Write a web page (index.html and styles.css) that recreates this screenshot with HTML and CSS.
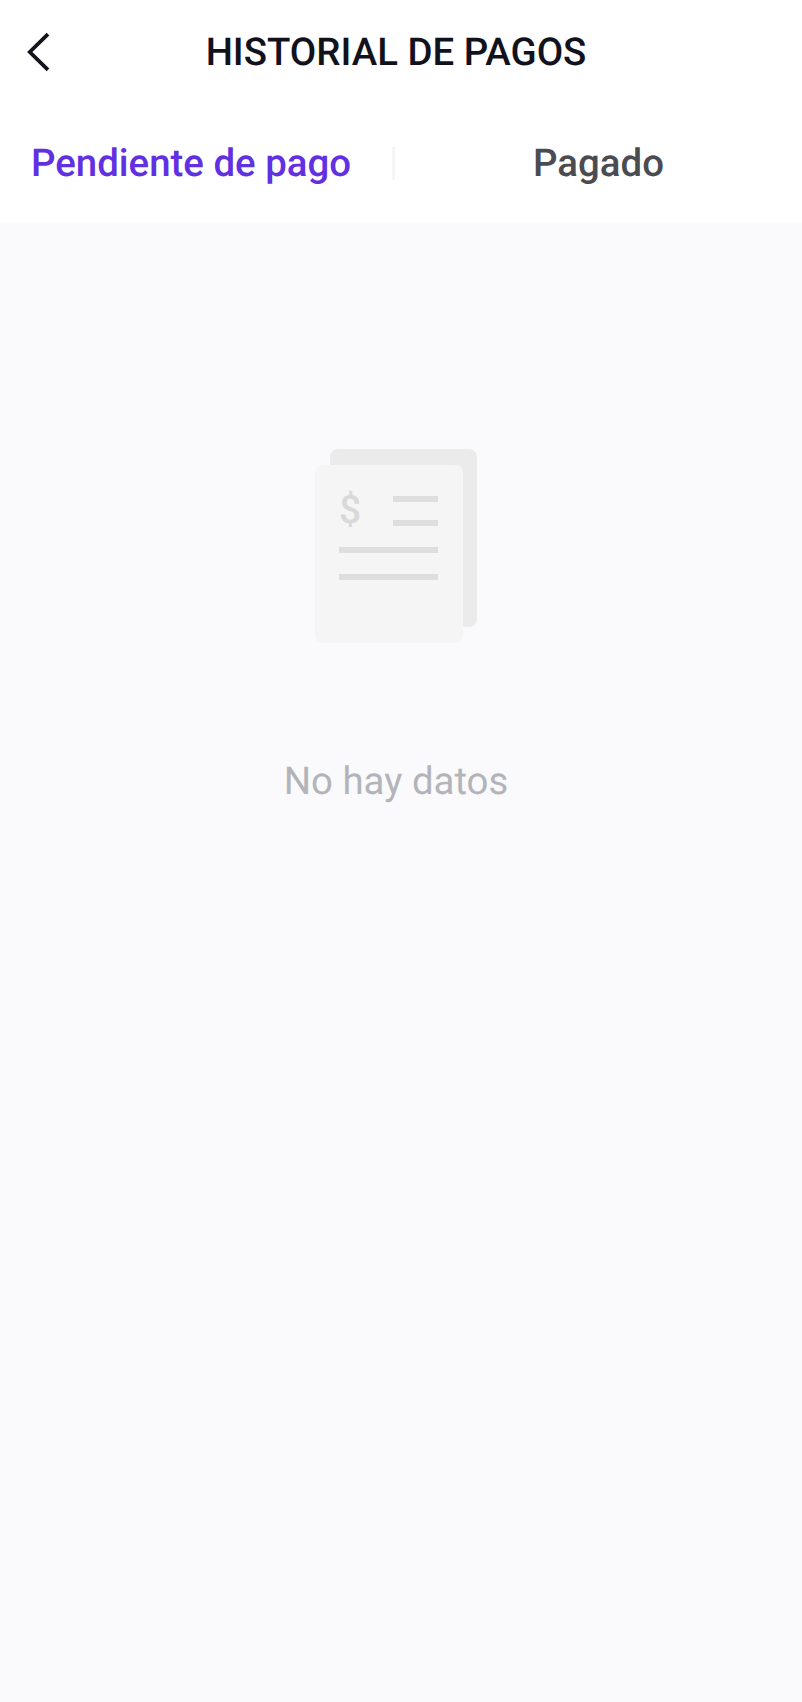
FILE: index.html
```html
<!DOCTYPE html>
<html lang="es">
<head>
<meta charset="utf-8">
<title>Historial de pagos</title>
<link rel="stylesheet" href="styles.css">
</head>
<body>
<div class="page">
  <header class="topbar">
    <svg class="back" width="26" height="40" viewBox="0 0 26 40" aria-hidden="true"><path d="M22 2.2 L3.8 20 L22 37.8" fill="none" stroke="#14141c" stroke-width="3.8"/></svg>
    <h1 class="title">HISTORIAL DE PAGOS</h1>
  </header>
  <nav class="tabs">
    <div class="tab tab-active">Pendiente de pago</div>
    <div class="divider"></div>
    <div class="tab">Pagado</div>
  </nav>
  <main class="empty">
    <svg class="empty-icon" width="162" height="194" viewBox="0 0 162 194" aria-hidden="true">
      <rect x="15" y="0" width="147" height="178" rx="8" fill="#ebebec"/>
      <rect x="0" y="16" width="148" height="178" rx="8" fill="#f6f5f6"/>
      <text class="dollar" x="24" y="74">$</text>
      <rect x="78" y="47" width="45" height="6" fill="#dedede"/>
      <rect x="78" y="71" width="45" height="6" fill="#dedede"/>
      <rect x="24" y="98" width="99" height="6" fill="#dedede"/>
      <rect x="24" y="125" width="99" height="6" fill="#dedede"/>
    </svg>
    <p class="empty-text">No hay datos</p>
  </main>
</div>
</body>
</html>
```
FILE: styles.css
```css
* { box-sizing: border-box; margin: 0; padding: 0; }
html, body { height: 100%; }
body { font-family: Roboto, "Liberation Sans", sans-serif; background: #fafafc; text-rendering: geometricPrecision; }
.page { display: flex; flex-direction: column; height: 1702px; }
.topbar { position: relative; height: 104px; padding: 1px 10px 0 0; background: #fff; display: flex; align-items: center; justify-content: center; }
.back { position: absolute; left: 26px; top: 32px; }
.title { font-size: 38.4px; font-weight: 500; line-height: 103px; color: #12121c; }
.tabs { height: 119px; background: #fff; display: flex; align-items: center; }
.tab { font-size: 38.4px; font-weight: 500; color: #4b4b52; flex: 1; text-align: center; }
.tab-active { flex: 0 0 392px; color: #6130e3; text-align: left; padding-left: 31px; white-space: nowrap; }
.divider { width: 3px; height: 33px; background: #f5f5f6; }
.empty { flex: 1; display: flex; flex-direction: column; align-items: center; padding: 226px 10px 0 0; }
.empty-icon { display: block; }
.dollar { font-family: Roboto, sans-serif; font-size: 39px; font-weight: 500; fill: #d9d9da; }
.empty-text { margin-top: 115px; font-size: 38.4px; line-height: 48px; color: #b3b4b9; }
```
